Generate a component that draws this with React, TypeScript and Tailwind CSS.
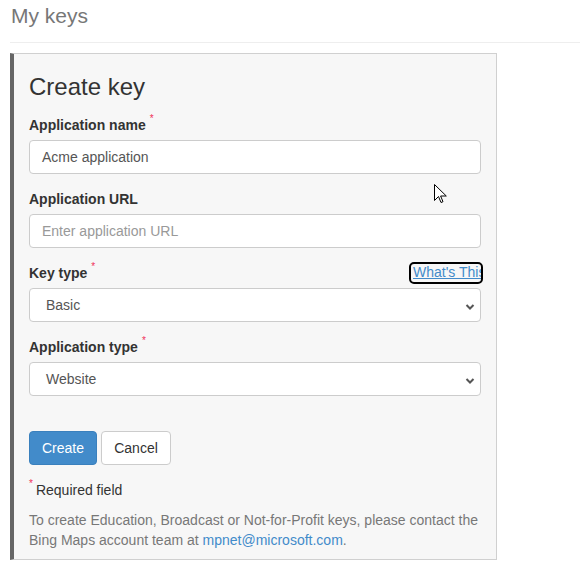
import React from "react";

const font = { fontFamily: '"Liberation Sans", Arial, Helvetica, sans-serif' };

function Req() {
  return (
    <span className="relative top-[-6px] ml-[4px] text-[10px] font-normal leading-none text-[#f0305a]">*</span>
  );
}

function Label({ children, req }: { children: React.ReactNode; req?: boolean }) {
  return (
    <div className="mb-[5px] flex h-[20px] items-center text-[14px] font-bold leading-[20px] text-[#333]">
      <span>{children}</span>
      {req && <Req />}
    </div>
  );
}

function Chevron() {
  return (
    <svg width="10" height="6" viewBox="0 0 10 6" className="pointer-events-none absolute right-[5px] top-[15px]">
      <path d="M1.5 1 L5 4.5 L8.5 1" fill="none" stroke="#555" strokeWidth="2" />
    </svg>
  );
}

function SelectBox({ value }: { value: string }) {
  return (
    <div className="relative h-[34px] w-full rounded-[4px] border border-[#ccc] bg-white">
      <div className="pl-[16px] text-[14px] leading-[32px] text-[#555]">{value}</div>
      <Chevron />
    </div>
  );
}

export default function App() {
  return (
    <div className="relative h-[577px] w-[580px] overflow-hidden bg-white pl-[10px]" style={font}>
      <div className="h-[42px] pl-[1px] pt-[4px] text-[21px] leading-[23px] text-[#777]">My keys</div>
      <div className="h-px w-full bg-[#eee]" />
      <div className="mt-[10px] w-[487px] border border-l-4 border-[#d0d0d0] border-l-[#666] bg-[#f7f7f7] pb-[9px] pl-[15px] pr-[15px] pt-[20px]">
        <div className="mb-[15px] text-[24px] leading-[26px] text-[#333]">Create key</div>

        <div className="mb-[15px]">
          <Label req>Application name</Label>
          <div className="h-[34px] w-full rounded-[4px] border border-[#ccc] bg-white pl-[12px] text-[14px] leading-[32px] text-[#555]">
            Acme application
          </div>
        </div>

        <div className="mb-[15px]">
          <Label>Application URL</Label>
          <div className="h-[34px] w-full rounded-[4px] border border-[#ccc] bg-white pl-[12px] text-[14px] leading-[32px] text-[#999]">
            Enter application URL
          </div>
        </div>

        <div className="mb-[15px]">
          <div className="flex items-start justify-between">
            <Label req>Key type</Label>
            <span className="mt-[1px] block h-[18px] w-[70px] overflow-hidden whitespace-nowrap rounded-[3px] pl-[2px] text-[14px] leading-[16px] text-[#428bca] underline outline outline-2 outline-black">
              What's This
            </span>
          </div>
          <SelectBox value="Basic" />
        </div>

        <div>
          <Label req>Application type</Label>
          <SelectBox value="Website" />
        </div>

        <div className="mt-[35px] flex gap-[4px]">
          <div className="flex h-[34px] w-[68px] items-center justify-center rounded-[4px] border border-[#3a80bd] bg-[#428bca] text-[14px] text-white">
            Create
          </div>
          <div className="flex h-[34px] w-[70px] items-center justify-center rounded-[4px] border border-[#ccc] bg-white text-[14px] text-[#333]">
            Cancel
          </div>
        </div>

        <div className="mt-[15px] flex h-[20px] items-center text-[14px] leading-[20px] text-[#333]">
          <span className="relative top-[-6px] mr-[3px] text-[10px] leading-none text-[#f0305a]">*</span>
          <span>Required field</span>
        </div>

        <p className="mt-[10px] text-[14px] leading-[20px] text-[#777]">
          To create Education, Broadcast or Not-for-Profit keys, please contact the Bing Maps account team at{" "}
          <span className="text-[#428bca]">mpnet@microsoft.com</span>.
        </p>
      </div>

      <svg className="absolute left-[434px] top-[184px]" width="14" height="21" viewBox="0 0 14 21">
        <path
          d="M0.5 0.5 L0.5 16.5 L4.5 12.5 L7 18.5 L9 17.7 L6.6 12 L12.3 12 Z"
          fill="white"
          stroke="black"
          strokeWidth="1"
          strokeLinejoin="miter"
        />
      </svg>
    </div>
  );
}
